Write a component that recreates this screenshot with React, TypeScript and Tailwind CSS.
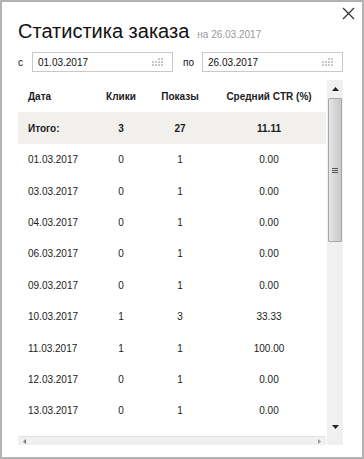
import React from "react";

const rows: [string, string, string, string][] = [
  ["01.03.2017", "0", "1", "0.00"],
  ["03.03.2017", "0", "1", "0.00"],
  ["04.03.2017", "0", "1", "0.00"],
  ["06.03.2017", "0", "1", "0.00"],
  ["09.03.2017", "0", "1", "0.00"],
  ["10.03.2017", "1", "3", "33.33"],
  ["11.03.2017", "1", "1", "100.00"],
  ["12.03.2017", "0", "1", "0.00"],
  ["13.03.2017", "0", "1", "0.00"],
];

function CalIcon() {
  const dots: [number, number][] = [];
  for (let r = 0; r < 3; r++)
    for (let c = 0; c < 4; c++) {
      if (r === 0 && c < 2) continue;
      dots.push([c * 3, r * 3]);
    }
  return (
    <svg width="11" height="9" viewBox="0 0 11 9" className="shrink-0">
      {dots.map(([x, y], i) => (
        <rect key={i} x={x} y={y} width="2" height="2" fill="#c9c9c9" />
      ))}
    </svg>
  );
}

function DateInput({ value }: { value: string }) {
  return (
    <div className="flex items-center justify-between w-[141px] h-[20px] border border-[#c9c9c9] pl-[5px] pr-[9px] text-[10px] text-[#111]">
      <span>{value}</span>
      <CalIcon />
    </div>
  );
}

function Row({
  cells,
  bold,
  bg,
  h,
}: {
  cells: [string, string, string, string];
  bold?: boolean;
  bg?: boolean;
  h: string;
}) {
  return (
    <div
      className={`grid grid-cols-[82px_42px_76px_102px] items-center shrink-0 text-[10px] text-[#1b1b22] ${
        bold ? "font-bold" : ""
      } ${bg ? "bg-[#f2f0ed]" : ""} ${h}`}
    >
      <div className="pl-[10px]">{cells[0]}</div>
      <div className="text-center">{cells[1]}</div>
      <div className="text-center">{cells[2]}</div>
      <div className="text-center">{cells[3]}</div>
    </div>
  );
}

export default function App() {
  return (
    <div
      className="relative w-[364px] h-[459px] bg-white border-2 border-[#b3b3b3] overflow-hidden"
      style={{ fontFamily: '"Liberation Sans", Arial, sans-serif' }}
    >
      <svg
        className="absolute top-[5px] right-[7px]"
        width="13"
        height="13"
        viewBox="0 0 13 13"
      >
        <path d="M1 1L12 12M12 1L1 12" stroke="#333" strokeWidth="1.3" />
      </svg>

      <div className="pl-[16px] pt-[19px]">
        <div className="flex items-baseline h-[26px]">
          <span className="text-[20px] text-[#111] leading-none">Статистика заказа</span>
          <span className="ml-[8px] text-[10px] text-[#999]">на 26.03.2017</span>
        </div>
        <div className="flex items-center mt-[5px] text-[10px] text-[#111]">
          <span className="w-[14px]">с</span>
          <DateInput value="01.03.2017" />
          <span className="ml-[10px] w-[19px]">по</span>
          <DateInput value="26.03.2017" />
        </div>

        <div className="mt-[8px] w-[325px] h-[365px] flex flex-col">
          <div className="flex h-[356px]">
            <div className="w-[308px] flex flex-col overflow-hidden">
              <Row cells={["Дата", "Клики", "Показы", "Средний CTR (%)"]} bold h="h-[32px]" />
              <Row cells={["Итого:", "3", "27", "11.11"]} bold bg h="h-[32px]" />
              {rows.map((r) => (
                <Row key={r[0]} cells={r} h="h-[31.4px]" />
              ))}
            </div>
            {/* vertical scrollbar */}
            <div className="ml-[1px] w-[16px] bg-[#f0f0f0] flex flex-col">
              <div className="h-[18px] flex items-center justify-center">
                <svg width="7" height="4" viewBox="0 0 7 4">
                  <path d="M0 4L3.5 0L7 4Z" fill="#222" />
                </svg>
              </div>
              <div className="h-[144px] mx-[1px] border border-[#a8a8a8] rounded-[1px] bg-gradient-to-r from-[#e6e6e6] via-[#d6d6d6] to-[#c8c8c8] flex items-center justify-center">
                <div className="flex flex-col gap-[1px]">
                  <div className="w-[6px] h-[1px] bg-[#555]" />
                  <div className="w-[6px] h-[1px] bg-[#555]" />
                  <div className="w-[6px] h-[1px] bg-[#555]" />
                </div>
              </div>
              <div className="flex-1" />
              <div className="h-[18px] flex items-center justify-center">
                <svg width="7" height="4" viewBox="0 0 7 4">
                  <path d="M0 0L7 0L3.5 4Z" fill="#222" />
                </svg>
              </div>
            </div>
          </div>
          {/* horizontal scrollbar */}
          <div className="flex h-[9px]">
            <div className="w-[308px] bg-[#f0f0f0] border-t border-[#e2e2e2] flex items-center justify-between px-[5px]">
              <svg width="3" height="5" viewBox="0 0 3 5">
                <path d="M3 0L0 2.5L3 5Z" fill="#777" />
              </svg>
              <svg width="3" height="5" viewBox="0 0 3 5">
                <path d="M0 0L3 2.5L0 5Z" fill="#999" />
              </svg>
            </div>
            <div className="ml-[1px] w-[16px] bg-[#f0f0f0]" />
          </div>
        </div>
      </div>
    </div>
  );
}
